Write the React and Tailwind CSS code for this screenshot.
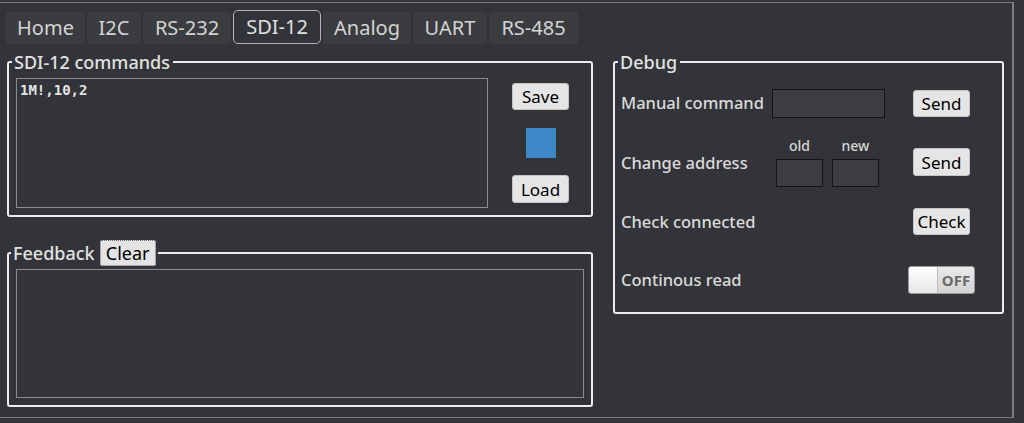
import { useState } from "react";

const TABS = [
  { name: "Home", w: "w-[79px]" },
  { name: "I2C", w: "w-[54px]" },
  { name: "RS-232", w: "w-[88px]" },
  { name: "SDI-12", w: "w-[88px]" },
  { name: "Analog", w: "w-[88px]" },
  { name: "UART", w: "w-[74px]" },
  { name: "RS-485", w: "w-[89px]" },
];

const Btn = ({ children, className = "" }) => (
  <button
    className={`flex items-center justify-center rounded-[3px] border border-[#c4c4c4] bg-[#e5e5e5] text-[17px] leading-none text-black ${className}`}
  >
    {children}
  </button>
);

const Label = ({ children }) => (
  <span className="text-[16.5px] font-medium whitespace-nowrap text-[#dadada]">{children}</span>
);

const App = () => {
  const [active, setActive] = useState("SDI-12");
  const [on, setOn] = useState(false);

  return (
    <div className="h-[423px] w-[1024px] overflow-hidden bg-[#333439] font-['Noto_Sans',sans-serif]">
      <div className="mt-[2px] h-[416px] w-[1014px] border-t border-r-2 border-b border-[#7c7c7c]">
        {/* tab strip */}
        <div className="flex h-[41px] items-end gap-[2px] pl-[6px]">
          {TABS.map((t) => (
            <div
              key={t.name}
              onClick={() => setActive(t.name)}
              className={
                t.name === active
                  ? `${t.w} flex h-[34px] items-center justify-center rounded-[5px] border border-[#b4b4b4] text-[20px] text-[#e0e0e0]`
                  : `${t.w} flex h-[32px] items-center justify-center rounded-[3px] bg-[#3b3c40] text-[20px] text-[#d4d4d4]`
              }
            >
              {t.name}
            </div>
          ))}
        </div>

        <div className="mt-[7px] flex gap-[20px] pl-[7px]">
          {/* left column */}
          <div className="flex w-[586px] flex-col">
            <fieldset className="rounded-[3px] border-2 border-[#ececec] px-[7px] pt-[5px] pb-[7px]">
              <legend className="ml-[-4px] pr-[3px] pl-[2px] text-[18px] leading-[22px] font-medium text-[#e2e2e2]">
                SDI-12 commands
              </legend>
              <div className="flex">
                <textarea
                  readOnly
                  defaultValue="1M!,10,2"
                  className="h-[130px] w-[472px] resize-none border border-[#8c8c8c] bg-transparent p-[3px] font-['DejaVu_Sans_Mono',monospace] text-[14px] leading-[17px] font-bold text-[#e4e4e4] outline-none"
                />
                <div className="ml-[24px] flex w-[57px] flex-col items-center pt-[5px]">
                  <Btn className="h-[27px] w-[57px]">Save</Btn>
                  <div className="mt-[18px] h-[30px] w-[30px] bg-[#3f88c8]" />
                  <Btn className="mt-[17px] h-[28px] w-[57px]">Load</Btn>
                </div>
              </div>
            </fieldset>

            <fieldset className="mt-[23px] rounded-[3px] border-2 border-[#ececec] px-[7px] pt-[3px] pb-[7px]">
              <legend className="ml-[-5px] flex items-center pr-[2px] pl-[2px]">
                <span className="text-[18px] leading-[22px] font-medium text-[#e2e2e2]">
                  Feedback
                </span>
                <button className="ml-[5px] flex h-[26px] w-[56px] items-center justify-center rounded-[2px] border border-dotted border-[#6a6a6a] bg-[#e3e3e3] text-[18px] leading-none text-black">
                  Clear
                </button>
              </legend>
              <textarea
                readOnly
                className="block h-[129px] w-[568px] resize-none border border-[#8c8c8c] bg-transparent outline-none"
              />
            </fieldset>
          </div>

          {/* debug column */}
          <fieldset className="h-[263px] w-[391px] rounded-[3px] border-2 border-[#ececec] px-[6px] pt-[15px]">
            <legend className="ml-[-3px] pr-[3px] pl-[2px] text-[18px] leading-[22px] font-medium text-[#e2e2e2]">
              Debug
            </legend>
            <div className="flex flex-col gap-[29px]">
              <div className="flex h-[30px] items-center">
                <div className="w-[151px]">
                  <Label>Manual command</Label>
                </div>
                <div className="w-[141px]">
                  <input className="h-[29px] w-[113px] border border-[#141414] bg-[#3c3d41] outline-none" />
                </div>
                <Btn className="h-[27px] w-[57px]">Send</Btn>
              </div>

              <div className="flex h-[30px] items-center">
                <div className="w-[155px] pt-[2px]">
                  <Label>Change address</Label>
                </div>
                <div className="flex w-[137px] gap-[9px]">
                  <div className="flex w-[47px] flex-col items-center">
                    <span className="text-[14px] leading-[18px] font-medium text-[#d6d6d6]">old</span>
                    <input className="mt-[4px] h-[28px] w-[47px] border border-[#141414] bg-[#3c3d41] outline-none" />
                  </div>
                  <div className="flex w-[47px] flex-col items-center">
                    <span className="text-[14px] leading-[18px] font-medium text-[#d6d6d6]">new</span>
                    <input className="mt-[4px] h-[28px] w-[47px] border border-[#141414] bg-[#3c3d41] outline-none" />
                  </div>
                </div>
                <Btn className="h-[28px] w-[57px]">Send</Btn>
              </div>

              <div className="flex h-[30px] items-center">
                <div className="w-[292px] pt-[2px]">
                  <Label>Check connected</Label>
                </div>
                <Btn className="h-[27px] w-[57px]">Check</Btn>
              </div>

              <div className="flex h-[30px] items-center">
                <div className="w-[287px] pt-[1px]">
                  <Label>Continous read</Label>
                </div>
                <div
                  onClick={() => setOn(!on)}
                  className="flex h-[28px] w-[67px] overflow-hidden rounded-[3px] border border-[#9a9a9a] bg-gradient-to-b from-[#e9e9e9] to-[#d4d4d4]"
                >
                  <div className="w-[29px] border-r border-[#bdbdbd] bg-gradient-to-b from-[#ffffff] to-[#e6e6e6]" />
                  <div className="flex flex-1 items-center justify-center text-[15px] font-bold text-[#6a6a6a]">
                    {on ? "ON" : "OFF"}
                  </div>
                </div>
              </div>
            </div>
          </fieldset>
        </div>
      </div>
    </div>
  );
};

export default App;
